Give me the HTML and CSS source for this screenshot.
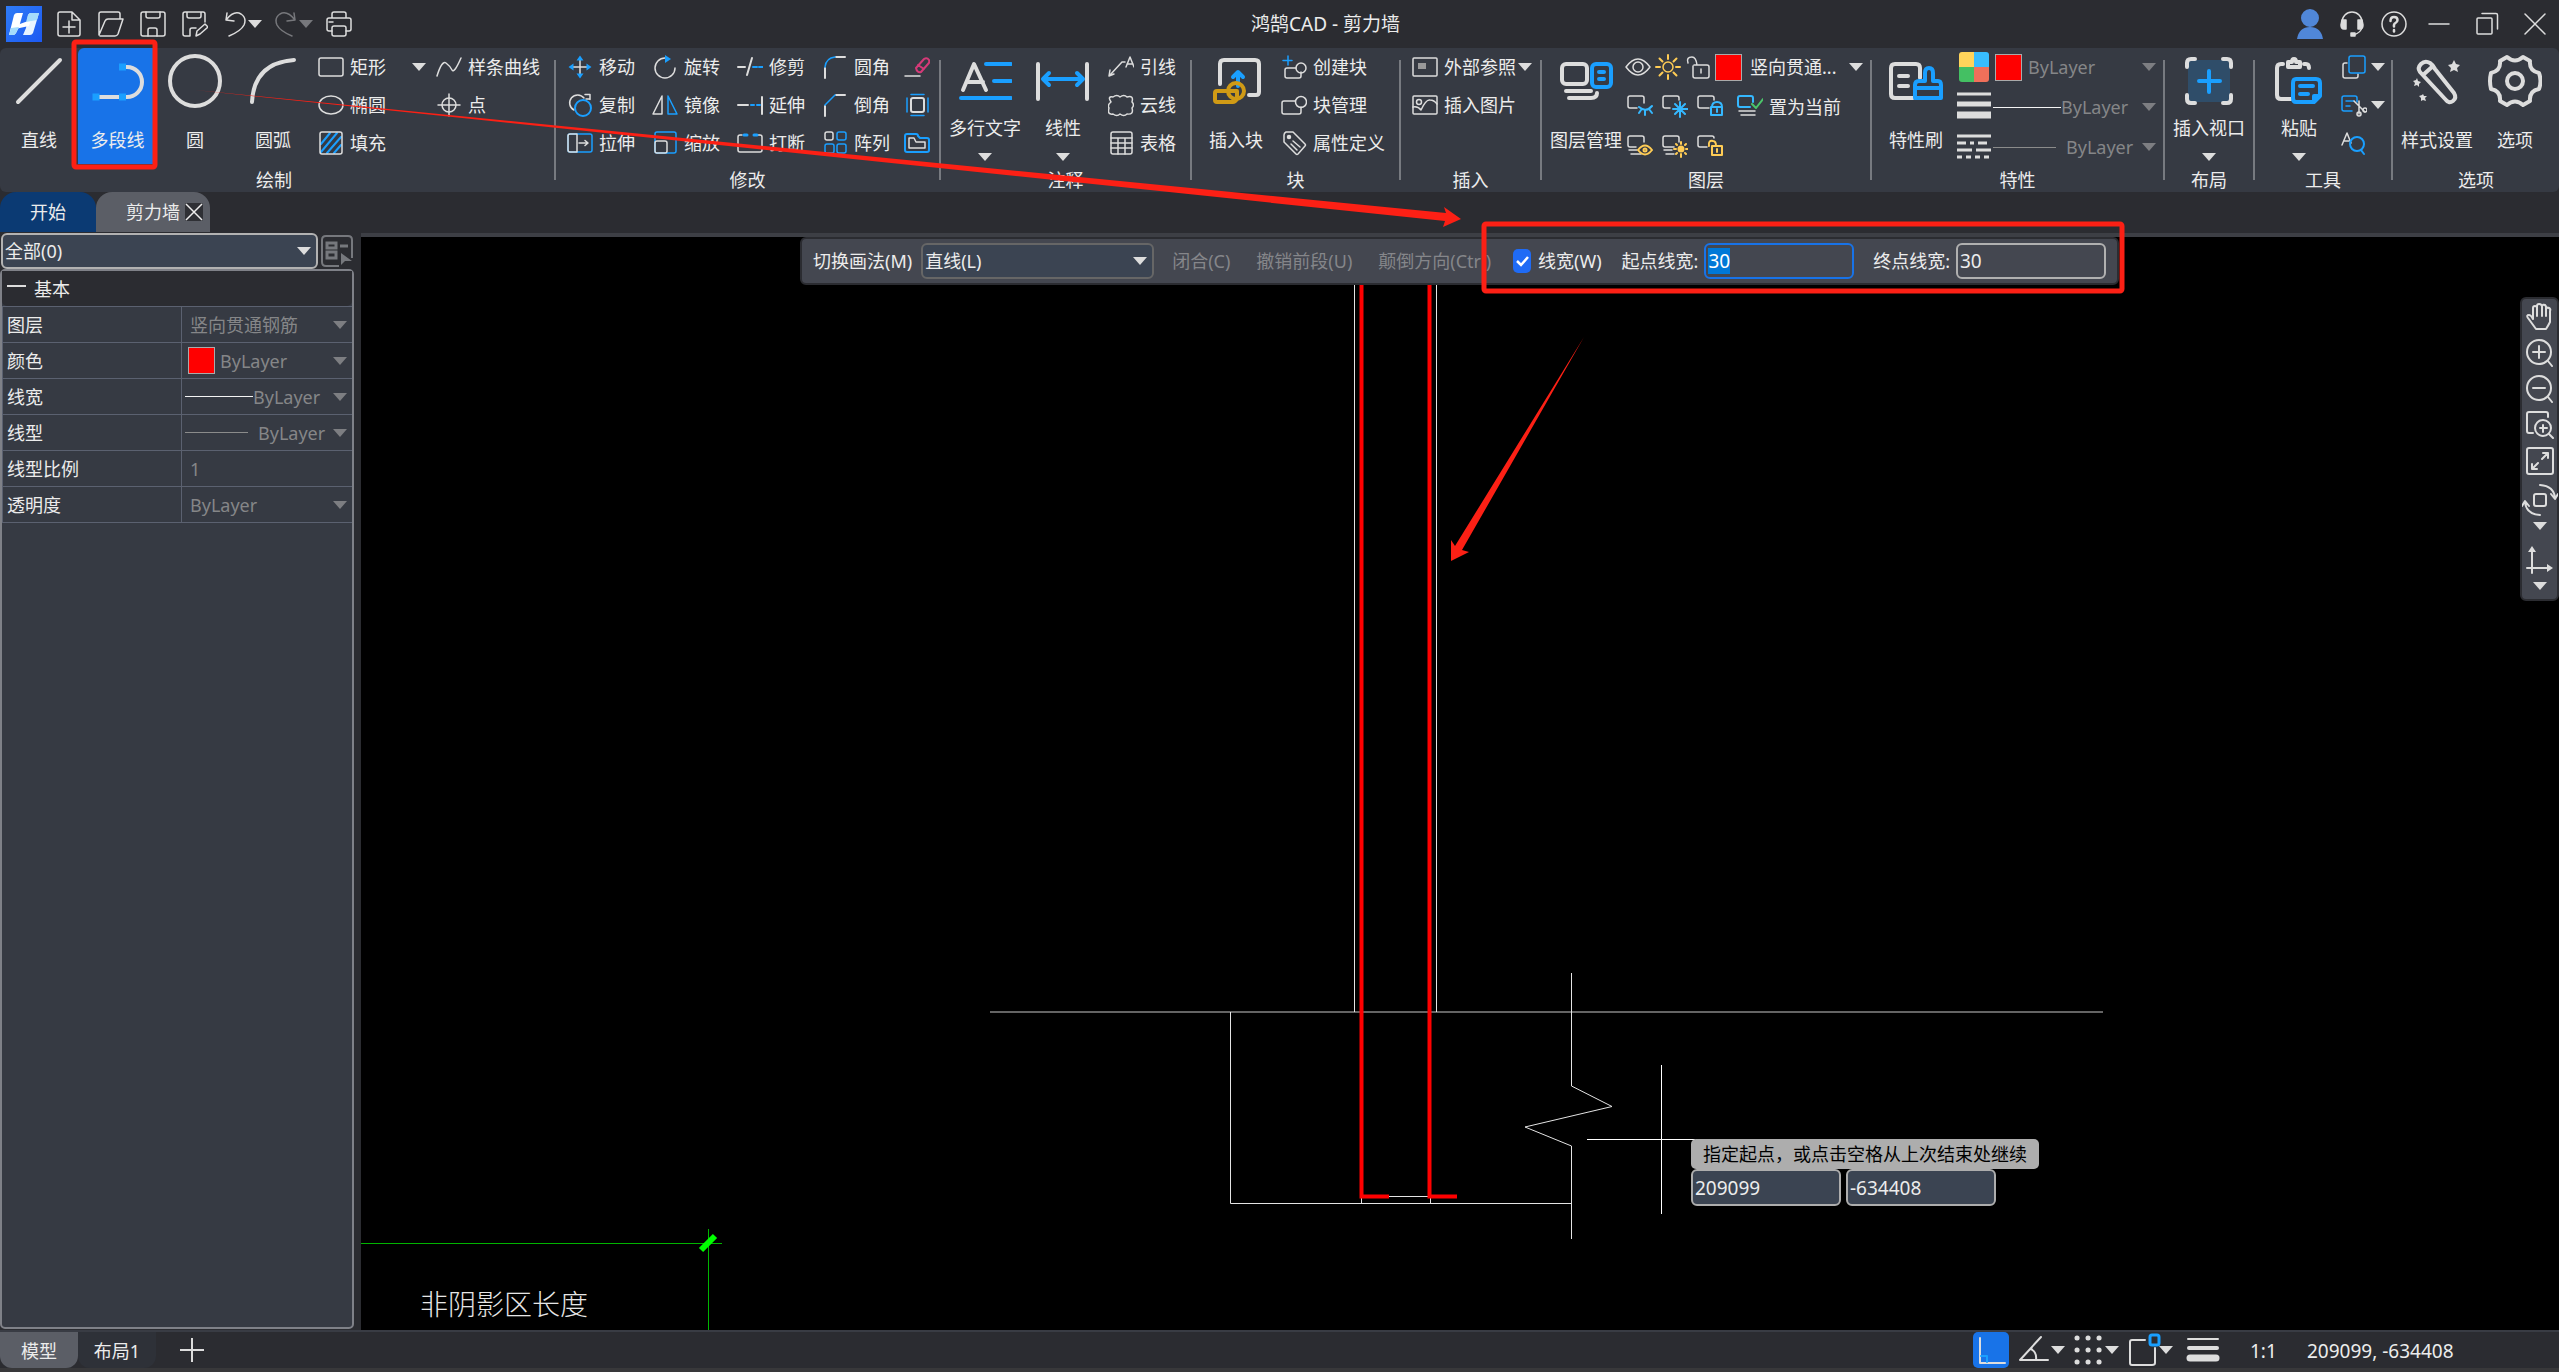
FILE: index.html
```html
<!DOCTYPE html>
<html lang="zh-CN">
<head>
<meta charset="utf-8">
<title>鸿鹄CAD - 剪力墙</title>
<link rel="stylesheet" href="styles.css">
</head>
<body>
<svg class="defs" aria-hidden="true">
  <symbol id="dd" viewBox="0 0 14 8"><path d="M0 0h14L7 8z" fill="currentColor"/></symbol>
</svg>

<header class="titlebar">
  <div class="quick">
    <svg class="logo" viewBox="0 0 36 36">
      <defs><linearGradient id="lg" x1="0" y1="0" x2="1" y2="1"><stop offset="0" stop-color="#2f7cf6"/><stop offset="1" stop-color="#1c59f2"/></linearGradient></defs>
      <rect width="36" height="36" fill="url(#lg)"/>
      <path d="M8 9q1-2 3-2h6l-4 14-3 6q-1 2-3 2H3z" fill="#fff"/>
      <path d="M22 9q1-2 3-2h8l-6 20q-1 2-3 2h-7l3-7z" fill="#e8f4ff"/>
      <path d="M11 19l14-5-2 6-14 3z" fill="#fff"/>
      <path d="M3 29l2-7 8-1-3 6q-1 2-3 2zM22 9q1-2 3-2h8l-2 7-11 2z" fill="#a5dcfb"/>
    </svg>
    <button class="qb" aria-label="新建"><svg class="i" viewBox="0 0 26 26"><path d="M16 1H4a2 2 0 0 0-2 2v20a2 2 0 0 0 2 2h18a2 2 0 0 0 2-2V9zM16 1v8h8M13 10v12M7 16h12"/></svg></button>
    <button class="qb" aria-label="打开"><svg class="i" viewBox="0 0 26 26"><path d="M1 24V3a2 2 0 0 1 2-2h17a2 2 0 0 1 2 2v5M1 24L7 10q1-2 3-2h15l-5 15q-1 2-3 2H2"/></svg></button>
    <button class="qb" aria-label="保存"><svg class="i" viewBox="0 0 26 26"><rect x="1" y="1" width="24" height="24" rx="2"/><path d="M6 1v4q0 2 2 2h10q2 0 2-2V1M8 25v-6q0-2 2-2h5q2 0 2 2v6"/></svg></button>
    <button class="qb" aria-label="另存为"><svg class="i" viewBox="0 0 26 26"><path d="M8 25H3a2 2 0 0 1-2-2V3q0-2 2-2h18q2 0 2 2v8M5 1v4q0 2 2 2h10q2 0 2-2V1M8 25v-6q0-2 2-2h4M14 25l1-5 8-7 3 3-8 7z"/></svg></button>
    <button class="qb wide" aria-label="撤销"><svg class="i" viewBox="0 0 26 26"><path d="M5 2l-1 7 8 1M4 9Q12-1 19 3q6 4 3 11-3 6-15 11"/></svg><svg class="dd"><use href="#dd"/></svg></button>
    <button class="qb wide off" aria-label="重做"><svg class="i" viewBox="0 0 26 26"><path d="M21 2l1 7-8 1M22 9Q14-1 7 3q-6 4-3 11 3 6 15 11"/></svg><svg class="dd"><use href="#dd"/></svg></button>
    <button class="qb" aria-label="打印"><svg class="i" viewBox="0 0 26 26"><path d="M6 7V3q0-2 2-2h10q2 0 2 2v4M6 20H3q-2 0-2-2V9q0-2 2-2h20q2 0 2 2v9q0 2-2 2h-3M3 11h4"/><rect x="6" y="15" width="14" height="10" rx="2"/></svg></button>
  </div>
  <h1>鸿鹄CAD - 剪力墙</h1>
  <div class="winctl">
    <button class="wb" aria-label="用户"><svg viewBox="0 0 32 32" width="32" height="32"><path d="M16 1a9 9 0 1 1 0 18 9 9 0 0 1 0-18zM3 31q2-12 13-12t13 12z" fill="#5087d8"/></svg></button>
    <button class="wb" aria-label="客服"><svg class="i" viewBox="0 0 26 26"><path d="M3 16v-5a10 10 0 0 1 20 0v5q-1 6-9 8"/><path d="M3 9h4v9H5q-3 0-3-4zM23 9h-4v9h2q3 0 3-4zM12 22h4v3h-4z" fill="#ddd"/></svg></button>
    <button class="wb" aria-label="帮助"><svg class="i" viewBox="0 0 26 26"><circle cx="13" cy="13" r="12"/><path d="M9.500 10q0-4 3.500-4t3.500 3q0 2-2 3t-1.500 3.500" stroke-width="2.500"/><path d="M13 19v1.500" stroke-width="2.500"/></svg></button>
    <button class="wb w2" aria-label="最小化"><svg class="i" viewBox="0 0 26 26"><path d="M3 13h20"/></svg></button>
    <button class="wb w2" aria-label="还原"><svg class="i" viewBox="0 0 26 26"><rect x="3" y="7" width="15" height="16" rx="1"/><path d="M8 2.500h14q1.500 0 1.500 1.500v14"/></svg></button>
    <button class="wb w2" aria-label="关闭"><svg class="i" viewBox="0 0 26 26"><path d="M3 3l20 20M23 3L3 23"/></svg></button>
  </div>
</header>

<nav class="ribbon">
  <section class="group g-draw">
    <div class="body">
      <button class="big"><svg class="bi" viewBox="0 0 54 54"><path d="M6 48L48 6"/></svg>直线</button>
      <button class="big active"><svg class="bi" viewBox="0 0 54 54"><path d="M8 43h28a15 15 0 0 0 0-30h-3"/><path d="M1.500 39.500h7v7h-7zM28 39.500h7v7h-7zM28 9.500h7v7h-7z" fill="#1a9fff" stroke="none"/></svg>多段线</button>
      <button class="big"><svg class="bi" viewBox="0 0 54 54"><circle cx="27" cy="27" r="25"/></svg>圆</button>
      <button class="big"><svg class="bi" viewBox="0 0 54 54"><path d="M6 48Q8 9 48 6"/></svg>圆弧</button>
      <div class="col first">
        <button class="tool"><svg class="i" viewBox="0 0 26 26"><rect x="1" y="4" width="24" height="18" rx="2"/></svg>矩形</button>
        <button class="tool"><svg class="i" viewBox="0 0 26 26"><ellipse cx="13" cy="13" rx="12" ry="9"/></svg>椭圆</button>
        <button class="tool"><svg class="i" viewBox="0 0 26 26"><path class="b" d="M3 14L12 3M3 22L19 3M9 23L23 7M16 23l7-8" stroke-width="2"/><rect x="2" y="2" width="22" height="22" rx="2"/></svg>填充</button>
      </div>
      <button class="drop" aria-label="更多矩形"><svg class="dd"><use href="#dd"/></svg></button>
      <div class="col">
        <button class="tool"><svg class="i" viewBox="0 0 26 26"><path d="M1 22Q6 6 10 9t6 7 9-12"/></svg>样条曲线</button>
        <button class="tool"><svg class="i" viewBox="0 0 26 26"><circle cx="13" cy="13" r="7"/><path d="M13 2v22M2 13h22"/></svg>点</button>
      </div>
    </div>
    <h2>绘制</h2>
  </section>
  <span class="sep"></span>
  <section class="group g-mod">
    <div class="body">
      <div class="modgrid">
        <button class="tool"><svg class="i" viewBox="0 0 26 26"><path d="M13 5v16M5 13h16"/><path class="bf" d="M13 1.500l3.500 5h-7zM13 24.500l3.500-5h-7zM1.500 13l5-3.500v7zM24.500 13l-5-3.500v7z"/></svg>移动</button>
        <button class="tool"><svg class="i" viewBox="0 0 26 26"><path d="M13 4A10 10 0 1 0 23 14"/><path class="bf" d="M13 1l6 4-6 4z"/></svg>旋转</button>
        <button class="tool"><svg class="i" viewBox="0 0 26 26"><path d="M1 13h7M10 21l5-17" stroke-width="2"/><path class="b" d="M16 13h4M22 13h4" stroke-width="2"/></svg>修剪</button>
        <button class="tool"><svg class="i" viewBox="0 0 26 26"><path d="M3 24V14M14 3h9" stroke-width="2"/><path class="b" d="M3 13Q4 4 13 3"/></svg>圆角</button>
        <button class="tool" aria-label="删除"><svg class="i" viewBox="0 0 26 26"><path d="M1 22h15"/><path d="M12 14l8-9q3-2 5 1 1 2-1 4l-7 8q-4 1-5-4zM14 11l6 4" stroke="#d53a78" stroke-width="2"/></svg></button>
        <button class="tool"><svg class="i" viewBox="0 0 26 26"><path d="M7 18A8 8 0 1 1 17 6M18 2.500h5v5M19 7h4"/><circle class="b" cx="16" cy="16" r="8" stroke-width="2"/></svg>复制</button>
        <button class="tool"><svg class="i" viewBox="0 0 26 26"><path d="M10 4v18H1z"/><path class="b" d="M16 4v18h9z"/></svg>镜像</button>
        <button class="tool"><svg class="i" viewBox="0 0 26 26"><path d="M1 13h10M25 5v17" stroke-width="2"/><path class="b" d="M14 13h3M20 13h3" stroke-width="2"/></svg>延伸</button>
        <button class="tool"><svg class="i" viewBox="0 0 26 26"><path d="M3 24V14M14 3h9" stroke-width="2"/><path class="b" d="M3 13L13 3"/></svg>倒角</button>
        <button class="tool" aria-label="偏移"><svg class="i" viewBox="0 0 26 26"><rect x="7" y="6" width="13" height="14" rx="2" stroke-width="2"/><path class="b" d="M7 2.500h13M7 23.500h13M3 6v14M24 6v14"/></svg></button>
        <button class="tool"><svg class="i" viewBox="0 0 26 26"><rect class="b" x="1" y="4" width="24" height="18" rx="2"/><path d="M10 4H3q-2 0-2 2v14q0 2 2 2h7zM12 13h8M18 10.500l3 2.500-3 2.500"/></svg>拉伸</button>
        <button class="tool"><svg class="i" viewBox="0 0 26 26"><rect class="b" x="3" y="2" width="21" height="21" rx="2"/><rect x="3" y="11" width="12" height="12" rx="2"/></svg>缩放</button>
        <button class="tool"><svg class="i" viewBox="0 0 26 26"><path d="M5 5H3Q1 5 1 7v13q0 2 2 2h20q2 0 2-2V7q0-2-2-2h-2"/><path class="b" d="M7 5h3M17 5h3" stroke-width="3"/></svg>打断</button>
        <button class="tool"><svg class="i" viewBox="0 0 26 26"><rect x="3" y="2" width="8" height="8" rx="2"/><path class="b" d="M17 2h5q2 0 2 2v4q0 2-2 2h-5q-2 0-2-2V4q0-2 2-2zM17 14h5q2 0 2 2v5q0 2-2 2h-5q-2 0-2-2v-5q0-2 2-2zM5 14h5q2 0 2 2v5q0 2-2 2H5q-2 0-2-2v-5q0-2 2-2z"/></svg>阵列</button>
        <button class="tool" aria-label="多段线编辑"><svg class="i" viewBox="0 0 26 26"><path class="b" d="M3 4h9q2 0 2 2l2 2h7q2 0 2 2v10q0 2-2 2H3q-2 0-2-2V6q0-2 2-2z" stroke-width="2"/><path d="M5 8h5l2 4h9v6H5z"/></svg></button>
      </div>
    </div>
    <h2>修改</h2>
  </section>
  <span class="sep"></span>
  <section class="group g-note">
    <div class="body pad">
      <button class="big two"><svg class="bi" viewBox="0 0 54 54"><path d="M5 36L16 10l12 26M9 28h16"/><path class="b" d="M28 10h25M36 27h17M3 44h50"/></svg>多行文字<svg class="dd"><use href="#dd"/></svg></button>
      <button class="big two"><svg class="bi" viewBox="0 0 54 54"><path d="M2 10v35M51 10v35"/><path class="b" d="M8 25h37M13 19l-6 6 6 6M41 19l6 6-6 6"/></svg>线性<svg class="dd"><use href="#dd"/></svg></button>
      <div class="col first">
        <button class="tool"><svg class="i" viewBox="0 0 26 26"><path d="M17 8h-3L2 21M2 16l-1 6 5-2M18 13l4-10 4 10M19 10h6"/></svg>引线</button>
        <button class="tool"><svg class="i" viewBox="0 0 26 26"><path d="M3 10Q-1 4 5 5q4-3 7 0 4-3 7 0 7-2 5 5 3 3 0 6 2 7-5 6-3 3-7 0-3 3-7 0-6 1-4-6-2-3 2-6z"/></svg>云线</button>
        <button class="tool"><svg class="i" viewBox="0 0 26 26"><rect x="3" y="2" width="21" height="22" rx="2"/><path d="M3 8h21M3 13h21M3 18h21M10 8v16M17 8v16"/></svg>表格</button>
      </div>
    </div>
    <h2>注释</h2>
  </section>
  <span class="sep"></span>
  <section class="group g-block">
    <div class="body pad">
      <button class="big"><svg class="bi" viewBox="0 0 54 54"><path d="M11 30V10q0-4 4-4h31q4 0 4 4v28q0 3-3 3h-7"/><path class="b" d="M29 32V19M24 23l5-5 5 5"/><path d="M8 37h20v8q-2 3-4 3H8q-2 0-2-2v-7q0-2 2-2z" stroke="#d09a15"/><circle cx="27" cy="37" r="8" stroke="#d09a15"/></svg>插入块</button>
      <div class="col first">
        <button class="tool"><svg class="i" viewBox="0 0 26 26"><path class="b" d="M7 2v9M2 6.500h9"/><path d="M15 14H6q-2 0-2 2v6q0 2 2 2h12q2 0 2-2v-4"/><circle cx="20" cy="14" r="5"/></svg>创建块</button>
        <button class="tool"><svg class="i" viewBox="0 0 26 26"><path d="M14 9H3q-2 0-2 2v9q0 2 2 2h15q2 0 2-2v-5"/><circle cx="20" cy="10" r="5.500"/></svg>块管理</button>
        <button class="tool"><svg class="i" viewBox="0 0 26 26"><path d="M3 5q0-2 2-3h7l12 12q1 1 0 2l-7 8q-1 1-2 0L3 12zM12 11l7 6M10 14l6 6"/><circle cx="8" cy="7" r="1.500" fill="#ddd"/></svg>属性定义</button>
      </div>
    </div>
    <h2>块</h2>
  </section>
  <span class="sep"></span>
  <section class="group g-insert">
    <div class="body">
      <div class="col">
        <button class="tool"><svg class="i" viewBox="0 0 26 26"><rect x="1" y="4" width="24" height="18" rx="1"/><path d="M6 9h8v6H6z" fill="#999" stroke="none"/></svg>外部参照<svg class="dd near"><use href="#dd"/></svg></button>
        <button class="tool"><svg class="i" viewBox="0 0 26 26"><rect x="1" y="4" width="24" height="18" rx="1"/><circle cx="7" cy="10" r="2.500"/><path d="M1 15q5-1 8 3 5-11 9-10 4 0 7 4"/></svg>插入图片</button>
      </div>
    </div>
    <h2>插入</h2>
  </section>
  <span class="sep"></span>
  <section class="group g-layer">
    <div class="body pad">
      <button class="big"><svg class="bi" viewBox="0 0 54 54"><rect x="3" y="10" width="25" height="20" rx="4"/><path d="M7 37h25M10 44h22q6 0 6-5"/><rect class="b" x="33" y="10" width="19" height="23" rx="4"/><path class="b" d="M40 18h5M40 25h5"/></svg>图层管理</button>
      <div class="rows">
        <div class="row">
          <svg class="i" viewBox="0 0 26 26"><path d="M1 13Q13-3 25 13 13 29 1 13z"/><circle cx="13" cy="13" r="5"/></svg>
          <svg class="i sun" viewBox="0 0 26 26"><circle cx="13" cy="13" r="5"/><path d="M13 1v4M13 21v4M1 13h4M21 13h4M4.500 4.500l3 3M18.500 18.500l3 3M21.500 4.500l-3 3M7.500 18.500l-3 3" stroke-width="2"/></svg>
          <svg class="i" viewBox="0 0 26 26"><path d="M3 9Q1 3 7 3q4 0 5 8M9 11h13q2 0 2 2v9q0 2-2 2H10q-2 0-2-2V12M16 15v4"/></svg>
          <span class="swatch"></span>
          <select class="layer" aria-label="当前图层"><option>竖向贯通...</option></select>
          <svg class="dd"><use href="#dd"/></svg>
        </div>
        <div class="row icons">
          <button class="tool" aria-label="隐藏图层"><svg class="i" viewBox="0 0 26 26"><path d="M10 14H3q-2 0-2-2V4q0-2 2-2h12q2 0 2 2v5"/><path class="c" d="M12 13q7 6 13-1M14 16l-2 3M18 16v5M22 15l3 4"/></svg></button>
          <button class="tool" aria-label="冻结图层"><svg class="i" viewBox="0 0 26 26"><path d="M8 14H3q-2 0-2-2V4q0-2 2-2h12q2 0 2 2v2"/><path class="c" d="M18 8v15M11 15h15M13 10l10 10M23 10L13 20"/></svg></button>
          <button class="tool" aria-label="锁定图层"><svg class="i" viewBox="0 0 26 26"><path d="M12 14H3q-2 0-2-2V4q0-2 2-2h12q2 0 2 2v2"/><path class="c" d="M15 13q0-5 5-5t5 5M14 13h11v8H14zM20 15v3"/></svg></button>
          <button class="tool cur"><svg class="i" viewBox="0 0 26 26"><path class="c" d="M13 13H3q-2 0-2-2V4q0-2 2-2h11q2 0 2 2v4"/><path d="M2 17h16M4 21h14"/><path d="M15 10l4 4 7-9" stroke="#4bc46a" stroke-width="2"/></svg>置为当前</button>
        </div>
        <div class="row icons">
          <button class="tool" aria-label="显示图层"><svg class="i" viewBox="0 0 26 26"><path d="M9 13H3q-2 0-2-2V4q0-2 2-2h12q2 0 2 2v4M2 16h8M4 20h10"/><path class="y" d="M11 16q7-9 14 0-7 9-14 0z"/><circle class="y" cx="18" cy="16" r="1.500"/></svg></button>
          <button class="tool" aria-label="解冻图层"><svg class="i" viewBox="0 0 26 26"><path d="M12 13H3q-2 0-2-2V4q0-2 2-2h12q2 0 2 2v4M2 16h8M4 20h8"/><circle class="y" cx="19" cy="15" r="2.500" fill="#fc5"/><path class="y" d="M19 8v2M19 20v3M12 15h2M24 15h2M14 10l1 1M24 10l-1 1M14 20l1-1M24 20l-1-1"/></svg></button>
          <button class="tool" aria-label="解锁图层"><svg class="i" viewBox="0 0 26 26"><path d="M10 13H3q-2 0-2-2V4q0-2 2-2h12q2 0 2 2"/><path class="y" d="M12 12q-1-6 4-5 3 0 3 5M15 12h10v9H15zM20 15v3"/></svg></button>
        </div>
      </div>
    </div>
    <h2>图层</h2>
  </section>
  <span class="sep"></span>
  <section class="group g-prop">
    <div class="body pad">
      <button class="big"><svg class="bi" viewBox="0 0 54 54"><path d="M31 24V14q0-4-4-4H6q-4 0-4 4v26q0 4 4 4h18M10 22h9M10 32h9"/><path class="b" d="M30 27h6v-8q0-5 4-5t4 5v8h5q3 0 3 4v13H26V31q0-4 4-4zM26 34h26"/></svg>特性刷</button>
      <div class="rows p">
        <div class="row">
          <svg class="pi" viewBox="-2 0 34 30"><path d="M3 0h12v15H0V3q0-3 3-3z" fill="#ffd45b"/><path d="M15 0h12q3 0 3 3v12H15z" fill="#38bdff"/><path d="M0 15h15v15H3q-3 0-3-3z" fill="#44c063"/><path d="M15 15h15v12q0 3-3 3H15z" fill="#f0705a"/></svg>
          <span class="swatch"></span>
          <select class="dim" aria-label="颜色"><option>ByLayer</option></select>
          <svg class="dd dim"><use href="#dd"/></svg>
        </div>
        <div class="row">
          <svg class="pi" viewBox="0 0 34 30"><path d="M0 2h34" stroke="#ddd" stroke-width="3"/><path d="M0 12h34" stroke="#ddd" stroke-width="5"/><path d="M0 23h34" stroke="#ddd" stroke-width="7"/></svg>
          <span class="line w"></span>
          <select class="dim" aria-label="线宽"><option>ByLayer</option></select>
          <svg class="dd dim"><use href="#dd"/></svg>
        </div>
        <div class="row">
          <svg class="pi" viewBox="0 0 34 30"><g stroke="#ddd" stroke-width="3"><path d="M0 4h34"/><path d="M0 11h34" stroke-dasharray="9 4 4 4"/><path d="M0 18h34" stroke-dasharray="15 4"/><path d="M0 25h34" stroke-dasharray="5 4"/></g></svg>
          <span class="line t"></span>
          <select class="dim" aria-label="线型"><option>ByLayer</option></select>
          <svg class="dd dim"><use href="#dd"/></svg>
        </div>
      </div>
    </div>
    <h2>特性</h2>
  </section>
  <span class="sep"></span>
  <section class="group g-view">
    <div class="body pad">
      <button class="big two"><svg class="bi" viewBox="0 0 54 54"><rect x="6" y="6" width="42" height="42" fill="#2f4d69" stroke="none"/><path d="M5 13V9q0-4 4-4h4M41 5h4q4 0 4 4v4M49 41v4q0 4-4 4h-4M13 49H9q-4 0-4-4v-4"/><path class="b" d="M27 17v21M17 27h21"/></svg>插入视口<svg class="dd"><use href="#dd"/></svg></button>
    </div>
    <h2>布局</h2>
  </section>
  <span class="sep"></span>
  <section class="group g-tool">
    <div class="body pad">
      <button class="big two"><svg class="bi" viewBox="0 0 54 54"><path d="M19 45H9q-4 0-4-4V14q0-4 4-4h2M32 10h2q3 0 3 4M16 13V8h4q0-3 2-3t2 3h4v5z"/><path class="b" d="M24 25h20q4 0 4 4v13l-6 6H24q-3 0-3-4V29q0-4 3-4zM42 48v-6h6M28 32h13M28 40h8"/></svg>粘贴<svg class="dd"><use href="#dd"/></svg></button>
      <div class="col clip">
        <button class="tool" aria-label="复制"><svg class="i" viewBox="0 0 26 26"><path d="M6 9H4q-2 0-2 2v11q0 2 2 2h11q2 0 2-2v-2"/><rect class="b" x="8" y="2" width="16" height="17" rx="2"/></svg><svg class="dd"><use href="#dd"/></svg></button>
        <button class="tool" aria-label="剪切"><svg class="i" viewBox="0 0 26 26"><path class="b" d="M11 19H3q-2 0-2-2V6q0-2 2-2h11q2 0 2 2v4M5 9h8M5 14h4"/><path d="M13 9l11 11M18 9v13"/><circle cx="18" cy="22" r="2"/><circle cx="24" cy="18" r="2"/></svg><svg class="dd"><use href="#dd"/></svg></button>
        <button class="tool" aria-label="查找文字"><svg class="i" viewBox="0 0 26 26"><path d="M1 15L6 3l4 10M3 11h5"/><circle class="b" cx="16" cy="14" r="7" stroke-width="2"/><path class="b" d="M20 20l3 4" stroke-width="2"/></svg></button>
      </div>
    </div>
    <h2>工具</h2>
  </section>
  <span class="sep"></span>
  <section class="group g-opt">
    <div class="body pad">
      <button class="big"><svg class="bi" viewBox="0 0 54 54"><path d="M10 18q-3-4 1-8t9-1q3 2 5 6l19 24q3 5-1 8t-7-1zM13 21l10-9"/><path d="M44 6l2 4 4 1-3 3 1 4-4-2-4 2 1-4-3-3 4-1zM7 24l1 3 3 1-2 2v3l-2-2-3 1 1-3-2-2 3-1zM13 40l1 2h3l-2 2 1 3-3-1-2 1v-3l-2-2 3-1z" fill="#ddd" stroke="none"/></svg>样式设置</button>
      <button class="big"><svg class="bi" viewBox="0 0 54 54"><path d="M19 3q8 7 16 0l7 4q-1 10 9 12 3 8 0 16-10 2-9 12l-7 4q-8-7-16 0l-7-4q1-10-9-12-2-8 0-16 10-2 9-12z"/><circle cx="27" cy="27" r="8"/></svg>选项</button>
    </div>
    <h2>选项</h2>
  </section>
</nav>

<div class="tabs">
  <button class="tab home">开始</button>
  <div class="tab doc">剪力墙<button class="x" aria-label="关闭标签"><svg viewBox="0 0 18 18" width="18" height="18"><path d="M1 1l16 16M17 1L1 17" stroke="#eee" stroke-width="1.500"/></svg></button></div>
</div>

<main class="work">
  <aside class="side">
    <div class="pick">
      <div class="combo">
        <select aria-label="选择对象"><option>全部(0)</option></select>
        <svg class="dd"><use href="#dd"/></svg>
      </div>
      <button class="filter" aria-label="快速选择"><svg viewBox="0 0 32 32" width="32" height="32" fill="none" stroke="#76787d" stroke-width="2"><path d="M18 31H5q-4 0-4-4V5q0-4 4-4h22q4 0 4 4v18"/><path d="M6 8h9v5H6zM6 17h9v6H6zM19 11h8" stroke-width="3"/><path d="M20 18v12l4-4h7z" fill="#76787d" stroke="none"/></svg></button>
    </div>
    <section class="panel">
      <h3><span class="minus"></span>基本</h3>
      <table>
        <tr><th scope="row">图层</th><td><div class="cell ind"><select aria-label="图层"><option>竖向贯通钢筋</option></select><svg class="dd"><use href="#dd"/></svg></div></td></tr>
        <tr><th scope="row">颜色</th><td><div class="cell"><span class="swatch"></span><select aria-label="颜色"><option>ByLayer</option></select><svg class="dd"><use href="#dd"/></svg></div></td></tr>
        <tr><th scope="row">线宽</th><td><div class="cell ln"><span class="line w"></span><select aria-label="线宽"><option>ByLayer</option></select><svg class="dd"><use href="#dd"/></svg></div></td></tr>
        <tr><th scope="row">线型</th><td><div class="cell ln"><span class="line t"></span><select aria-label="线型"><option>ByLayer</option></select><svg class="dd"><use href="#dd"/></svg></div></td></tr>
        <tr><th scope="row">线型比例</th><td><div class="cell ind"><input type="text" value="1" aria-label="线型比例"></div></td></tr>
        <tr><th scope="row">透明度</th><td><div class="cell ind"><select aria-label="透明度"><option>ByLayer</option></select><svg class="dd"><use href="#dd"/></svg></div></td></tr>
      </table>
    </section>
  </aside>

  <section class="canvas">
    <svg class="drawing" viewBox="361 237 2198 1093" width="2198" height="1093">
      <g fill="none" stroke="#e4e4e4" stroke-width="1">
        <path d="M990 1012h1113" stroke="#c8c8c8"/>
        <path d="M1354.500 237v775M1436.500 237v775M1230.500 1012v191.500H1572M1361.500 1197v6M1430.500 1197v6M1389 1196.500h40"/>
        <path d="M1571.500 973v113l40.500 20.500-87 20.500 46.500 19v93"/>
        <path d="M1661.500 1065v149M1587 1139.500h108" stroke="#fff"/>
      </g>
      <path d="M1361.500 237v959.500H1389M1429.500 237v959.500H1457" fill="none" stroke="#f00" stroke-width="4"/>
      <path d="M361 1243.500h361M708.500 1229v101" stroke="#00b400" fill="none"/>
      <path d="M701 1250l14-14" stroke="#0f0" stroke-width="6"/>
      <text x="420" y="1315" class="cadtext">非阴影区长度</text>
    </svg>

    <form class="optbar">
      <label for="mode">切换画法(M)</label>
      <div class="combo mode"><select id="mode"><option>直线(L)</option></select><svg class="dd"><use href="#dd"/></svg></div>
      <button type="button" disabled>闭合(C)</button>
      <button type="button" disabled>撤销前段(U)</button>
      <button type="button" disabled>颠倒方向(Ctrl)</button>
      <label class="chk"><input type="checkbox" checked><svg viewBox="0 0 18 18" width="18" height="18"><path d="M4 9l4 4 7-8" fill="none" stroke="#fff" stroke-width="2.500"/></svg>线宽(W)</label>
      <label for="w1">起点线宽:</label><input id="w1" class="num" type="text" value="30">
      <label for="w2" class="end">终点线宽:</label><input id="w2" class="num" type="text" value="30">
    </form>

    <div class="viewtools">
      <button aria-label="平移"><svg class="i" viewBox="0 0 28 28"><path d="M10 26L2 15q-2-3 1-3 2 0 4 4V5q0-2 2-2t2 2v8V3q0-2 2-2t3 2v10V3q1-2 3-1 1 1 1 2v9V6q1-2 3-1 2 1 1 3v11q-2 4-4 7z"/></svg></button>
      <button aria-label="放大"><svg class="i" viewBox="0 0 28 28"><circle cx="13" cy="13" r="12"/><path d="M22 22l4 5M7 13h12M13 7v12"/></svg></button>
      <button aria-label="缩小"><svg class="i" viewBox="0 0 28 28"><circle cx="13" cy="13" r="12"/><path d="M22 22l4 5M7 13h12"/></svg></button>
      <button aria-label="窗口缩放"><svg class="i" viewBox="0 0 28 28"><path d="M7 22H3q-2 0-2-2V3q0-2 2-2h17q2 0 2 2v3"/><circle cx="17" cy="17" r="8"/><path d="M23 23l4 4M14 17h7M17 14v7"/></svg></button>
      <button aria-label="全图"><svg class="i" viewBox="0 0 28 28"><rect x="1" y="1" width="26" height="26" rx="2"/><path d="M16 12l6-6M17 6h5v5M12 16l-6 6M6 17v5h5"/></svg></button>
      <button class="orbit" aria-label="旋转视图"><svg class="i" viewBox="0 0 36 36" ><rect x="12" y="12" width="12" height="12" rx="2"/><path d="M18 3q14 1 15 13M29 12l4 5 3-5M18 33Q4 32 3 20M0 24l3-5 4 5"/></svg><svg class="dd"><use href="#dd"/></svg></button>
      <button class="axis" aria-label="坐标系"><svg class="i" viewBox="0 0 28 28"><path d="M6 27V4M1 22h22"/><path d="M6 0l4 6H2zM27 22l-6-4v8z" fill="#ddd" stroke="none"/></svg><svg class="dd"><use href="#dd"/></svg></button>
    </div>

    <div class="dyn">
      <p>指定起点，或点击空格从上次结束处继续</p>
      <input type="text" value="209099" aria-label="X 坐标"><input type="text" value="-634408" aria-label="Y 坐标">
    </div>
  </section>
</main>

<footer class="status">
  <button class="sheet on">模型</button>
  <button class="sheet">布局1</button>
  <button class="add" aria-label="新建布局"><svg viewBox="0 0 24 24" width="24" height="24"><path d="M0 12h24M12 0v24" stroke="#ddd" stroke-width="2"/></svg></button>
  <div class="modes">
    <button class="ortho" aria-label="正交"><svg class="si" viewBox="0 0 36 36"><path d="M7 6v25h25"/><path d="M8 24h6v6" stroke="#1a9fff"/></svg></button>
    <button aria-label="极轴"><svg class="si" viewBox="0 0 36 36"><path d="M31 28H3L24 5M14 17q6 3 5 11"/></svg><svg class="dd"><use href="#dd"/></svg></button>
    <button aria-label="栅格"><svg class="si" viewBox="0 0 36 36"><path d="M6 6h.1M17 6h.1M28 6h.1M6 18h.1M17 18h.1M28 18h.1M6 30h.1M17 30h.1M28 30h.1" stroke-width="5"/></svg><svg class="dd"><use href="#dd"/></svg></button>
    <button aria-label="对象捕捉"><svg class="si" viewBox="0 0 36 36"><path d="M20 8H7q-2 0-2 2v21q0 2 2 2h20q3 0 3-2V16"/><rect x="25" y="3" width="9" height="10" rx="2" stroke="#1a9fff" stroke-width="3"/></svg><svg class="dd"><use href="#dd"/></svg></button>
    <button class="lw" aria-label="线宽显示"><svg class="si" viewBox="0 0 36 36"><path d="M3 7h30" /><path d="M4 16h28" stroke-width="4"/><path d="M5 26h26" stroke-width="7"/></svg></button>
  </div>
  <span class="scale">1:1</span>
  <output class="coords">209099, -634408</output>
</footer>

<svg class="marks" viewBox="0 0 2559 1372" width="2559" height="1372" aria-hidden="true">
  <g fill="none" stroke="#fc2015" stroke-width="5">
    <rect x="74" y="42" width="81" height="125" rx="2"/>
    <rect x="1484" y="224" width="638" height="67" rx="2"/>
  </g>
  <path d="M195 90l1251 123-2-6 17 12-18 8 2-6zM1584 337l-122 213 7 2-18 9v-21l4 6z" fill="#fc2015"/>
</svg>
<script src="script.js"></script>
</body>
</html>
```
FILE: styles.css
```css
:root {
  --bg: #2b2c31;
  --bar: #363a43;
  --field: #3b4452;
  --text: #ececec;
  --icon: #dddddd;
  --dim: #858688;
  --blue: #1a9fff;
  --accent: #1873e8;
}
* { box-sizing: border-box; }
body {
  margin: 0;
  min-height: 100vh;
  display: flex;
  flex-direction: column;
  background: var(--bg);
  color: var(--text);
  font: 18px/24px "Noto Sans", "Noto Sans CJK SC", sans-serif;
  overflow: hidden;
  position: relative;
}
h1, h2, h3, p { margin: 0; font-weight: 400; font-size: 18px; }
button, select, input {
  font: inherit;
  color: inherit;
  background: none;
  border: 0;
  padding: 0;
  margin: 0;
}
button { white-space: nowrap; }
select { appearance: none; outline: none; }
input { outline: none; min-width: 0; }
option { color: #000; }
svg { display: block; flex: none; }
.defs { position: absolute; width: 0; height: 0; }
.dd { width: 14px; height: 8px; color: var(--icon); pointer-events: none; }
.dd.dim { color: #7d7e82; }
.i, .bi, .si { fill: none; stroke: var(--icon); stroke-linecap: round; stroke-linejoin: round; }
.i { width: 26px; height: 26px; stroke-width: 1.5; }
.i.sun { stroke: #ffcc55; }
.bi { width: 54px; height: 54px; stroke-width: 4; }
.b { stroke: var(--blue); }
.c { stroke: #35b8ff; stroke-width: 2; }
.y { stroke: #ffcc55; stroke-width: 2; }
.bf { fill: var(--blue); stroke: none; }

/* title bar */
.titlebar {
  height: 48px;
  display: grid;
  grid-template-columns: 1fr auto 1fr;
  align-items: center;
}
.titlebar h1 { font-size: 19px; padding-left: 92px; }
.quick { display: flex; align-items: center; padding-left: 6px; }
.logo { width: 36px; height: 36px; margin-right: 6px; }
.qb { width: 42px; height: 36px; display: flex; align-items: center; justify-content: center; }
.qb.wide { width: 51px; justify-content: flex-start; padding-left: 6px; }
.qb.off .i { stroke: #77787c; }
.qb.off .dd { color: #77787c; }
.winctl { display: flex; justify-content: flex-end; }
.wb { width: 42px; height: 36px; display: flex; align-items: center; justify-content: center; }
.wb.w2 { width: 48px; }

/* ribbon */
.ribbon { height: 144px; display: flex; background: var(--bar); border-radius: 6px; }
.group { flex-basis: 0; min-width: 0; height: 144px; display: flex; flex-direction: column; }
.g-draw { flex-grow: 554; }
.g-mod { flex-grow: 383; }
.g-note { flex-grow: 249; }
.g-block { flex-grow: 207; }
.g-insert { flex-grow: 139; }
.g-layer { flex-grow: 328; }
.g-prop { flex-grow: 291; }
.g-view { flex-grow: 88; }
.g-tool { flex-grow: 136; }
.g-opt { flex-grow: 166; }
.sep { width: 2px; height: 120px; margin-top: 12px; background: #777a80; }
.body { height: 120px; display: flex; align-items: flex-start; }
.body.pad { padding-left: 5px; }
.group h2 { text-align: center; line-height: 24px; }
.g-draw h2 { padding-right: 6px; }
.big {
  width: 78px;
  height: 116px;
  flex: none;
  display: flex;
  flex-direction: column;
  align-items: center;
  padding-top: 6px;
}
.big .bi { margin-bottom: 20px; }
.big.two .bi { margin-bottom: 8px; }
.big .dd { margin-top: 13px; }
.big.active { background: var(--accent); width: 75px; margin-right: 3px; padding-left: 4px; border-radius: 6px 0 0 0; }
.col { display: flex; flex-direction: column; }
.col.first { padding-left: 6px; }
.tool { height: 38px; display: flex; align-items: center; gap: 6px; }
.drop { width: 50px; height: 38px; padding-left: 26px; }
.modgrid {
  display: grid;
  grid-template-columns: 85px 85px 85px 82px 26px;
  grid-auto-rows: 38px;
  padding-left: 11px;
}
.g-insert .body { padding-left: 11px; }
.dd.near { margin-left: -4px; }
.clip { padding-left: 3px; }
.clip .tool { gap: 4px; }
.rows { flex: 1; display: flex; flex-direction: column; padding-right: 7px; margin-top: -1px; }
.row { height: 40px; display: flex; align-items: center; gap: 4px; }
.row.icons { padding-left: 2px; gap: 9px; }
.row .cur { margin-left: 5px; }
.row select { flex: 1; min-width: 0; height: 28px; }
.row .layer { margin-left: 4px; }
.row select.dim { color: var(--dim); }
.rows.p { padding-left: 2px; }
.rows.p .swatch + select { margin-left: 2px; }
.rows.p .line { margin-left: -2px; }
.rows.p .line.w + select { margin-left: -4px; }
.rows.p .line.t + select { margin-left: 6px; }
.pi { width: 34px; height: 30px; }
.swatch { width: 27px; height: 27px; flex: none; background: #f00; border: 1px solid #aaa; }
.line { flex: none; height: 1px; }
.line.w { width: 68px; background: #f4f4f4; }
.line.t { width: 63px; background: #8b8b8b; }

/* document tabs */
.tabs { height: 41px; display: flex; }
.tab { height: 40px; border-radius: 16px 16px 0 0; display: flex; align-items: center; }
.tab.home { width: 96px; justify-content: center; background: #0b3a73; }
.tab.doc { width: 114px; padding-left: 30px; gap: 5px; background: #5b5e66; }
.tab .x { width: 18px; height: 18px; background: #2f3035; border-radius: 2px; }

/* work area */
.work { flex: 1; display: flex; align-items: stretch; }
.side { width: 361px; padding-right: 7px; flex: none; display: flex; flex-direction: column; }
.pick { display: flex; height: 36px; gap: 3px; align-items: center; padding-left: 1px; }
.combo {
  height: 36px;
  display: flex;
  align-items: center;
  background: var(--field);
  border: 2px solid #b2b2b2;
  border-radius: 6px;
  padding: 0 5px 0 2px;
}
.combo select { flex: 1; min-width: 0; }
.pick .combo { width: 317px; }
.panel {
  flex: 1;
  background: var(--bar);
  border: 2px solid #7f8188;
  border-radius: 5px;
  margin-bottom: 1px;
  min-height: 0;
}
.panel h3 {
  height: 35px;
  display: flex;
  align-items: center;
  gap: 8px;
  padding-left: 5px;
  background: var(--bg);
  border-radius: 0 0 5px 5px;
}
.minus { width: 19px; height: 2px; background: var(--icon); margin-bottom: 6px; }
.panel table { width: 100%; border-collapse: collapse; table-layout: fixed; }
.panel th, .panel td { height: 36px; padding: 0; border: 1px solid #5b6170; }
.panel th { width: 179px; text-align: left; font-weight: 400; padding-left: 4px; }
.panel td { color: var(--dim); border-right: 0; }
.cell { height: 34px; display: flex; align-items: center; gap: 5px; padding: 0 5px 0 6px; }
.cell.ind { padding-left: 8px; }
.cell.ln { padding-left: 3px; gap: 0; }
.cell .line.t + select { margin-left: 10px; }
.cell select, .cell input { flex: 1; min-width: 0; }
.cell .dd { color: #7d7e82; }

.canvas {
  flex: 1;
  min-width: 0;
  position: relative;
  background: #000;
  border-top: 4px solid #3d3f45;
  overflow: hidden;
}
.drawing { position: absolute; left: 0; top: 0; }
.cadtext { font: 300 28px "Noto Sans CJK SC", sans-serif; fill: #e6e6e6; }
.optbar {
  position: absolute;
  top: 0;
  left: 50%;
  width: 1319px;
  margin-left: -660px;
  height: 48px;
  display: flex;
  align-items: center;
  background: #444750;
  border: 2px solid #2b2c31;
  border-radius: 6px;
  padding: 0 11px;
  white-space: nowrap;
}
.optbar button:disabled { color: #85868a; margin-right: 26px; }
.combo.mode { width: 233px; margin: 0 18px 0 9px; border-color: #666; }
.optbar .chk { display: flex; align-items: center; gap: 7px; position: relative; margin: 0 20px 0 -4px; }
.chk input { appearance: none; width: 18px; height: 24px; background: #1f6bf5; border-radius: 5px; }
.chk svg { position: absolute; left: 0; top: 3px; }
.num { width: 150px; height: 36px; border: 2px solid #b0b0b0; border-radius: 6px; padding: 0 2px; margin-left: 6px; font-size: 19px; }
.num:focus { border-color: var(--accent); }
.num::selection { background: #0078d7; color: #fff; }
.end { margin-left: auto; }

.viewtools {
  position: absolute;
  right: 0;
  top: 60px;
  width: 39px;
  height: 304px;
  display: flex;
  flex-direction: column;
  align-items: center;
  background: #444750;
  border: 2px solid #2b2c31;
  border-radius: 6px;
}
.viewtools button { height: 36px; display: flex; flex-direction: column; align-items: center; justify-content: center; }
.viewtools .i { width: 28px; height: 28px; stroke-width: 2; }
.viewtools .orbit { height: 54px; justify-content: flex-start; gap: 4px; padding-top: 3px; }
.viewtools .orbit .i { width: 36px; height: 36px; }
.viewtools .axis { height: 60px; justify-content: flex-start; gap: 8px; padding-top: 13px; }

.dyn { position: absolute; left: 1330px; top: 902px; display: flex; flex-wrap: wrap; gap: 0 5px; width: 360px; }
.dyn p { height: 30px; line-height: 30px; padding: 0 12px; background: #adadad; color: #000; border-radius: 5px; white-space: nowrap; }
.dyn input { width: 150px; height: 37px; background: var(--field); border: 2px solid #adadad; border-radius: 6px; padding: 0 2px; font-size: 19px; }

/* status bar */
.status {
  height: 42px;
  display: flex;
  align-items: flex-start;
  border-top: 2px solid #393c44;
  border-bottom: 4px solid #38383a;
}
.sheet { width: 78px; height: 36px; padding-top: 2px; border-radius: 0 0 12px 12px; background: #2e3138; }
.sheet.on { background: #5b5e66; }
.add { height: 36px; margin-left: 24px; }
.modes { margin-left: auto; display: flex; }
.modes button { height: 36px; display: flex; align-items: center; }
.si { width: 36px; height: 36px; stroke-width: 2; }
.modes .dd { margin: 0 6px 0 -2px; }
.modes .ortho { background: var(--accent); border-radius: 5px; margin-right: 8px; }
.modes .lw { margin-left: 6px; }
.scale, .coords { font-size: 19px; line-height: 38px; }
.scale { width: 57px; margin-left: 29px; }
.coords { width: 252px; }

.marks { position: absolute; left: 0; top: 0; pointer-events: none; }
```
FILE: script.js
```js
const startWidth = document.getElementById("w1");
startWidth.focus();
startWidth.select();
```
